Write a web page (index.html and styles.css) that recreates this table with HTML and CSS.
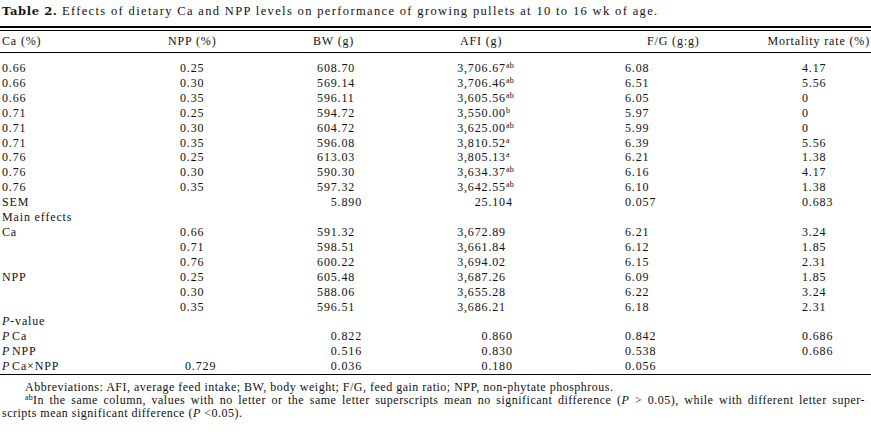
FILE: index.html
```html
<!DOCTYPE html>
<html lang="en">
<head>
<meta charset="utf-8">
<title>Table 2</title>
<link rel="stylesheet" href="styles.css">
</head>
<body>
<p class="caption"><span class="label">Table 2.</span> Effects of dietary Ca and NPP levels on performance of growing pullets at 10 to 16 wk of age.</p>
<table class="data">
  <colgroup>
    <col class="c1"><col class="c2"><col class="c3"><col class="c4"><col class="c5"><col class="c6">
  </colgroup>
  <thead>
    <tr>
      <th class="h1">Ca (%)</th>
      <th class="h2">NPP (%)</th>
      <th class="h3">BW (g)</th>
      <th class="h4">AFI (g)</th>
      <th class="h5">F/G (g:g)</th>
      <th class="h6">Mortality rate (%)</th>
    </tr>
  </thead>
  <tbody>
    <tr class="first"><td>0.66</td><td>0.25</td><td><span class="i3">608</span>.70</td><td><span class="i4">3,706</span>.67<sup>ab</sup></td><td>6.08</td><td>4.17</td></tr>
    <tr><td>0.66</td><td>0.30</td><td><span class="i3">569</span>.14</td><td><span class="i4">3,706</span>.46<sup>ab</sup></td><td>6.51</td><td>5.56</td></tr>
    <tr><td>0.66</td><td>0.35</td><td><span class="i3">596</span>.11</td><td><span class="i4">3,605</span>.56<sup>ab</sup></td><td>6.05</td><td>0</td></tr>
    <tr><td>0.71</td><td>0.25</td><td><span class="i3">594</span>.72</td><td><span class="i4">3,550</span>.00<sup>b</sup></td><td>5.97</td><td>0</td></tr>
    <tr><td>0.71</td><td>0.30</td><td><span class="i3">604</span>.72</td><td><span class="i4">3,625</span>.00<sup>ab</sup></td><td>5.99</td><td>0</td></tr>
    <tr><td>0.71</td><td>0.35</td><td><span class="i3">596</span>.08</td><td><span class="i4">3,810</span>.52<sup>a</sup></td><td>6.39</td><td>5.56</td></tr>
    <tr><td>0.76</td><td>0.25</td><td><span class="i3">613</span>.03</td><td><span class="i4">3,805</span>.13<sup>a</sup></td><td>6.21</td><td>1.38</td></tr>
    <tr><td>0.76</td><td>0.30</td><td><span class="i3">590</span>.30</td><td><span class="i4">3,634</span>.37<sup>ab</sup></td><td>6.16</td><td>4.17</td></tr>
    <tr><td>0.76</td><td>0.35</td><td><span class="i3">597</span>.32</td><td><span class="i4">3,642</span>.55<sup>ab</sup></td><td>6.10</td><td>1.38</td></tr>
    <tr><td>SEM</td><td></td><td><span class="i3">5</span>.890</td><td><span class="i4">25</span>.104</td><td>0.057</td><td>0.683</td></tr>
    <tr><td colspan="6">Main effects</td></tr>
    <tr><td>Ca</td><td>0.66</td><td><span class="i3">591</span>.32</td><td><span class="i4">3,672</span>.89</td><td>6.21</td><td>3.24</td></tr>
    <tr><td></td><td>0.71</td><td><span class="i3">598</span>.51</td><td><span class="i4">3,661</span>.84</td><td>6.12</td><td>1.85</td></tr>
    <tr><td></td><td>0.76</td><td><span class="i3">600</span>.22</td><td><span class="i4">3,694</span>.02</td><td>6.15</td><td>2.31</td></tr>
    <tr><td>NPP</td><td>0.25</td><td><span class="i3">605</span>.48</td><td><span class="i4">3,687</span>.26</td><td>6.09</td><td>1.85</td></tr>
    <tr><td></td><td>0.30</td><td><span class="i3">588</span>.06</td><td><span class="i4">3,655</span>.28</td><td>6.22</td><td>3.24</td></tr>
    <tr><td></td><td>0.35</td><td><span class="i3">596</span>.51</td><td><span class="i4">3,686</span>.21</td><td>6.18</td><td>2.31</td></tr>
    <tr><td colspan="6"><i>P</i>-value</td></tr>
    <tr><td><i>P</i>&#8202;Ca</td><td></td><td><span class="i3">0</span>.822</td><td><span class="i4">0</span>.860</td><td>0.842</td><td>0.686</td></tr>
    <tr><td><i>P</i>&#8202;NPP</td><td></td><td><span class="i3">0</span>.516</td><td><span class="i4">0</span>.830</td><td>0.538</td><td>0.686</td></tr>
    <tr class="last"><td><i>P</i>&#8202;Ca×NPP</td><td class="shift">0.729</td><td><span class="i3">0</span>.036</td><td><span class="i4">0</span>.180</td><td>0.056</td><td></td></tr>
  </tbody>
</table>
<div class="notes">
  <p>Abbreviations: AFI, average feed intake; BW, body weight; F/G, feed gain ratio; NPP, non-phytate phosphrous.</p>
  <p><span class="justified"><sup>ab</sup>In the same column, values with no letter or the same letter superscripts mean no significant difference (<i>P</i> &gt; 0.05), while with different letter super-</span>scripts mean significant difference (<i>P</i> &lt;0.05).</p>
</div>
</body>
</html>
```
FILE: styles.css
```css
html, body {
  margin: 0;
  padding: 0;
  background: #ffffff;
  color: #111111;
}

body {
  font-family: "Liberation Serif", "Times New Roman", serif;
  font-size: 12px;
  letter-spacing: 0.85px;
}

.caption {
  margin: 0;
  padding: 3px 0 7px 2px;
  line-height: 16px;
  font-size: 12.5px;
  letter-spacing: 1.35px;
  border-bottom: 2px solid #000000;
}

.caption .label {
  font-family: "DejaVu Serif", serif;
  font-weight: bold;
  font-size: 11.5px;
  letter-spacing: 0.6px;
}

.data {
  width: 100%;
  margin-top: 2px;
  table-layout: fixed;
  border-collapse: separate;
  border-spacing: 0;
}

.c1 { width: 160px; }
.c2 { width: 140px; }
.c3 { width: 145px; }
.c4 { width: 165px; }
.c5 { width: 135px; }
.c6 { width: 126px; }

.data th {
  font-weight: normal;
  text-align: left;
  line-height: 15px;
  padding-top: 3px;
  padding-bottom: 3px;
  padding-right: 0;
  border-top: 1px solid #000000;
  border-bottom: 1px solid #000000;
  white-space: nowrap;
}

.data th.h1 { padding-left: 2px; }
.data th.h2 { padding-left: 8px; }
.data th.h3 { padding-left: 13px; }
.data th.h4 { padding-left: 15px; }
.data th.h5 { padding-left: 37px; }
.data th.h6 { text-align: right; padding-right: 1px; padding-left: 0; }

.data td {
  padding: 0;
  line-height: 14.9px;
  white-space: nowrap;
  vertical-align: top;
}

.data tr.first td { padding-top: 8px; }
.data tr.last td { border-bottom: 1px solid #000000; }

.data td:nth-child(1) { padding-left: 2px; }
.data td:nth-child(2) { padding-left: 20px; }
.data td:nth-child(3) { padding-left: 17px; }
.data td:nth-child(4) { padding-left: 12px; }
.data td:nth-child(5) { padding-left: 15px; }
.data td:nth-child(6) { padding-left: 57px; }

.data td.shift { padding-left: 25px; }

.i3, .i4 {
  display: inline-block;
  text-align: right;
}
.i3 { width: 20.6px; }
.i4 { width: 31.4px; }

sup {
  font-size: 8px;
  line-height: 0;
  vertical-align: 4px;
  letter-spacing: 0.2px;
}

.notes {
  margin-top: 6px;
  padding: 0 6px 0 2px;
  font-size: 12px;
  letter-spacing: 0.5px;
  line-height: 13px;
}

.notes p {
  margin: 0;
  text-indent: 23px;
}

.notes .justified {
  display: block;
  text-align: justify;
  text-align-last: justify;
  white-space: nowrap;
}
```
